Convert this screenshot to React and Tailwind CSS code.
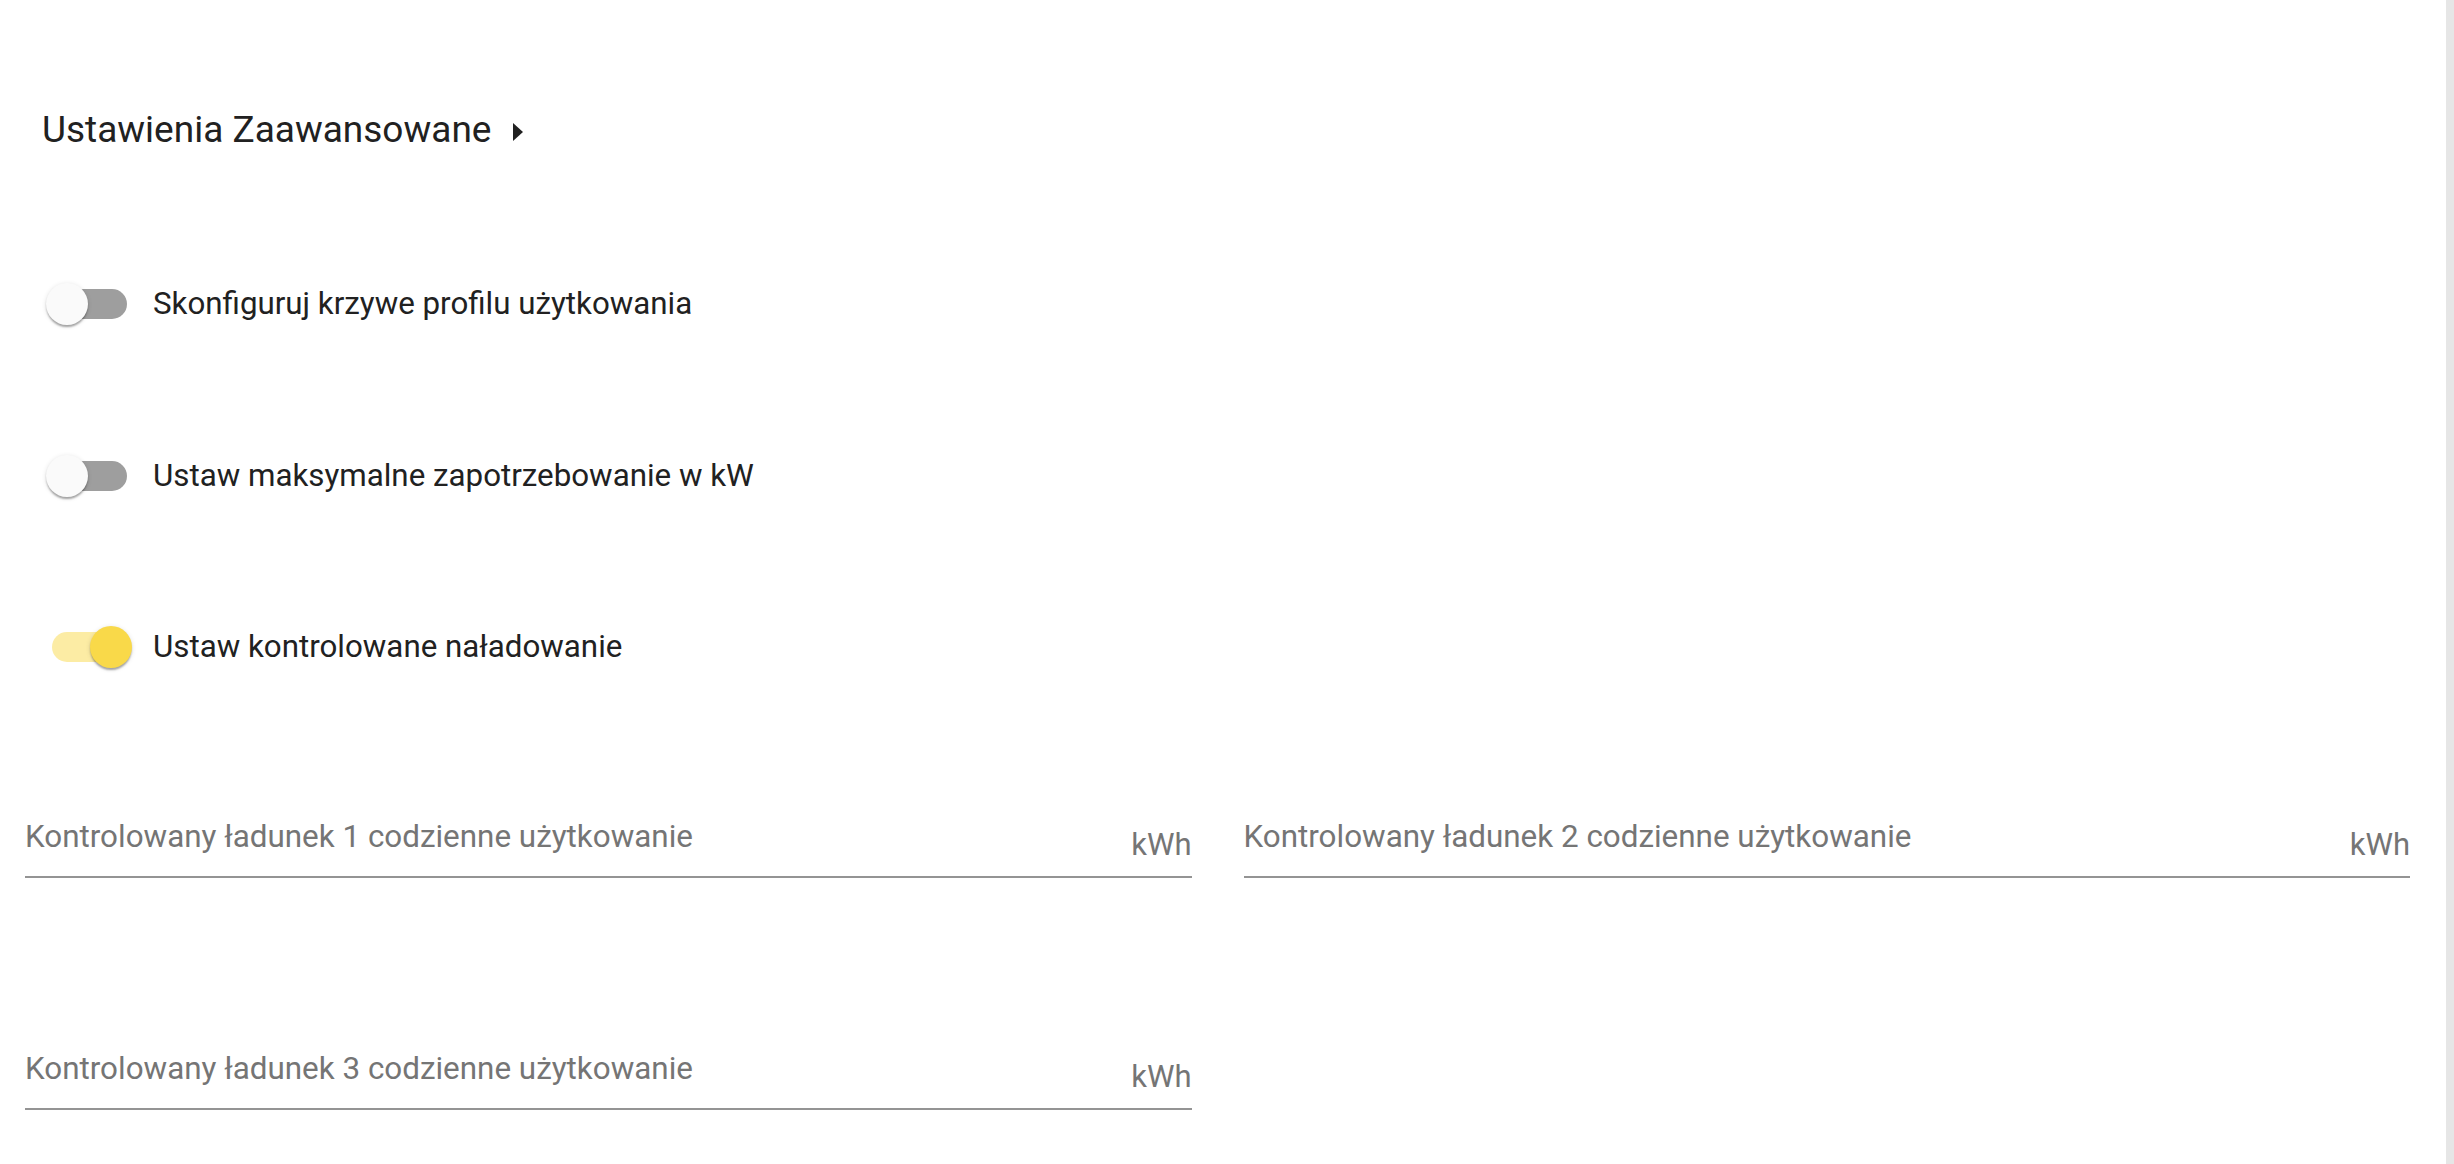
import React from "react";

function Toggle({ on }) {
  return (
    <div className="relative w-[92px] h-[46px] shrink-0">
      <div
        className={
          "absolute left-[8px] top-[8px] w-[75px] h-[30px] rounded-full " +
          (on ? "bg-[#f9d949]/50" : "bg-[#9e9e9e]")
        }
      />
      <div
        className={
          "absolute top-[2px] w-[42px] h-[42px] rounded-full shadow-[0_3px_2px_-1px_rgba(0,0,0,0.2),0_2px_2px_0_rgba(0,0,0,0.14),0_1px_5px_0_rgba(0,0,0,0.12)] " +
          (on ? "left-[46px] bg-[#f9d949]" : "left-[2px] bg-[#fafafa]")
        }
      />
    </div>
  );
}

function SwitchRow({ on, label, className }) {
  return (
    <div className={"flex items-center gap-[17px] pl-[19px] h-[46px] " + className}>
      <Toggle on={on} />
      <span className="text-[31.3px] leading-[40px] text-[#212121]">{label}</span>
    </div>
  );
}

function Field({ label }) {
  return (
    <div className="flex items-start justify-between border-b-2 border-[#949494] pb-[11px]">
      <span className="text-[31.4px] leading-[40px] text-[#757575]">{label}</span>
      <span className="pt-[8px] text-[31px] leading-[40px] text-[#757575]">kWh</span>
    </div>
  );
}

export default function App() {
  return (
    <div
      className="flex w-full min-h-[1164px] bg-white"
      style={{ fontFamily: "Roboto, 'Noto Sans', sans-serif" }}
    >
      <div className="flex-1 pl-[25px] pr-[36px] pt-[108px]">
        <div className="flex items-center h-[44px] pl-[17px] gap-[22px]">
          <span className="text-[37px] leading-[44px] text-[#212121]">
            Ustawienia Zaawansowane
          </span>
          <svg width="11" height="18" viewBox="0 0 11 18" className="mt-[3px]">
            <polygon points="0,0 10,9 0,18" fill="#212121" />
          </svg>
        </div>

        <SwitchRow className="mt-[129px]" on={false} label="Skonfiguruj krzywe profilu użytkowania" />
        <SwitchRow className="mt-[126px]" on={false} label="Ustaw maksymalne zapotrzebowanie w kW" />
        <SwitchRow className="mt-[125px]" on={true} label="Ustaw kontrolowane naładowanie" />

        <div className="mt-[147px] grid grid-cols-2 gap-x-[52px] gap-y-[171px]">
          <Field label="Kontrolowany ładunek 1 codzienne użytkowanie" />
          <Field label="Kontrolowany ładunek 2 codzienne użytkowanie" />
          <Field label="Kontrolowany ładunek 3 codzienne użytkowanie" />
        </div>
      </div>
      <div className="w-[8px] bg-[#e6e6e6]" />
    </div>
  );
}
